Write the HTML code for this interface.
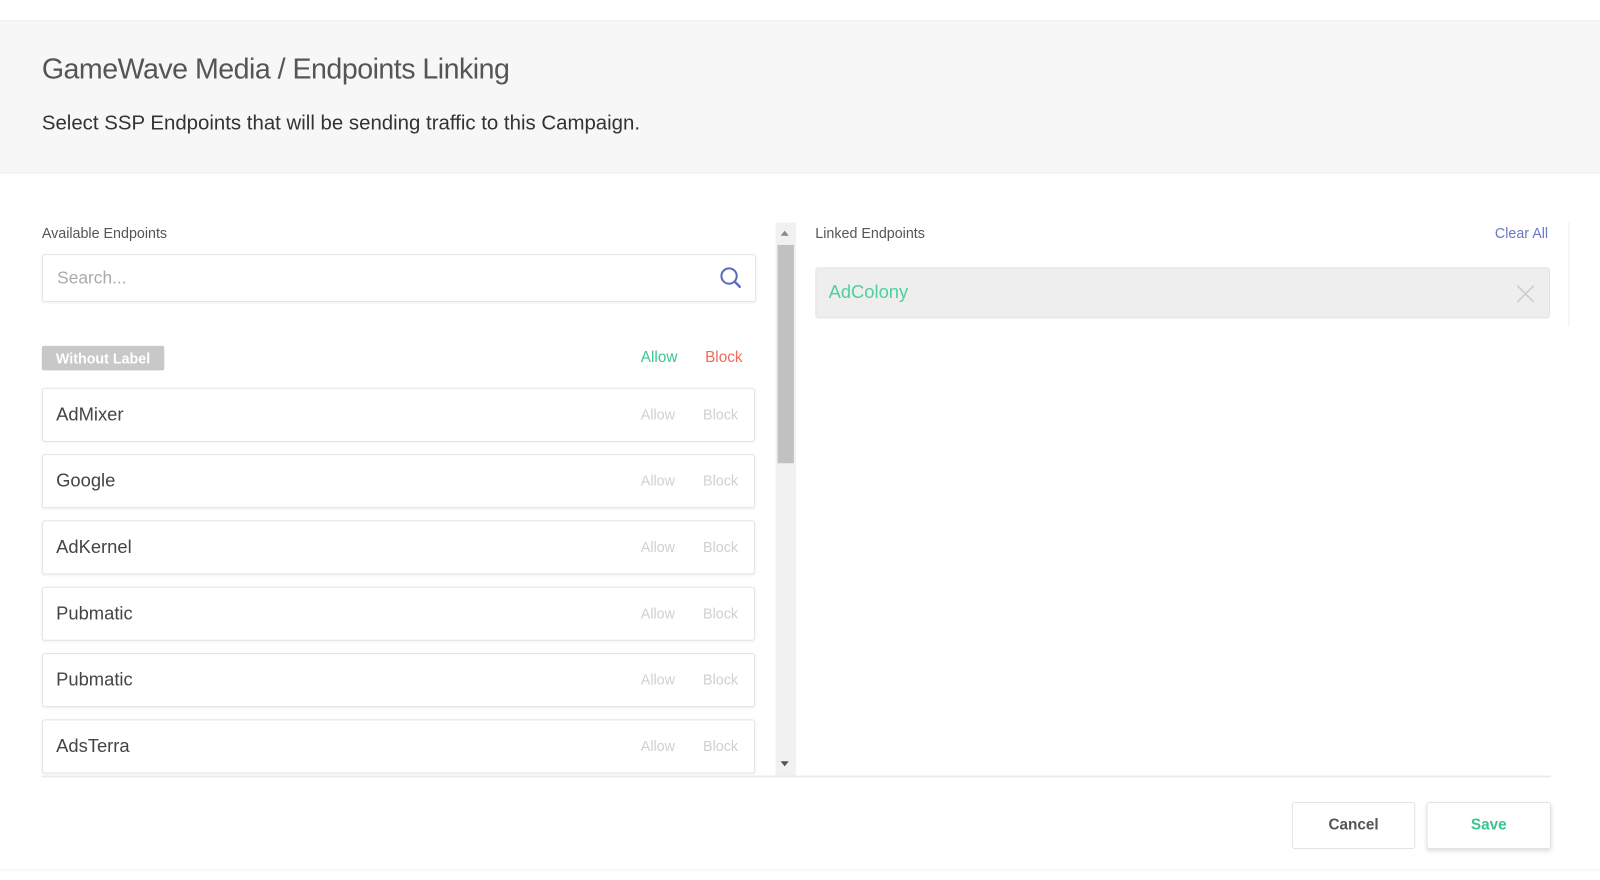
<!DOCTYPE html>
<html><head><style>
*{box-sizing:border-box;margin:0;padding:0}
body{width:1600px;height:879px;background:#fff;font-family:"Liberation Sans",sans-serif;position:relative;overflow:hidden}
#w{position:absolute;left:0;top:0;width:1568px;height:862px;transform:scale(1.0204);transform-origin:0 0}
.a{position:absolute}
.hdr{left:0;top:20px;width:1568px;height:150px;background:#f7f7f8;border-top:1px solid #ececec;border-bottom:1px solid #ececec}
.row{position:absolute;left:41px;width:699px;height:53px;border:1px solid #e3e3e3;border-radius:3px;background:#fff;box-shadow:0 1px 2px rgba(0,0,0,.05)}
.row .n{position:absolute;left:13px;top:15px;font-size:18px;color:#444}
.row .al{position:absolute;left:586px;top:17px;font-size:14px;color:#d0d0d0}
.row .bl{position:absolute;left:647px;top:17px;font-size:14px;color:#d0d0d0}
.btn{position:absolute;top:786px;height:46px;border:1px solid #e3e3e3;border-radius:3px;background:#fff;font-size:15px;font-weight:bold;text-align:center;line-height:44px}
</style></head><body><div id="w">
<div class="a hdr"></div>
<div class="a" style="left:41px;top:52px;font-size:28px;color:#555;letter-spacing:-0.5px">GameWave Media / Endpoints Linking</div>
<div class="a" style="left:41px;top:110px;font-size:20px;color:#333">Select SSP Endpoints that will be sending traffic to this Campaign.</div>

<div class="a" style="left:41px;top:220px;font-size:14px;color:#555">Available Endpoints</div>
<div class="a" style="left:41px;top:249px;width:700px;height:47px;border:1px solid #e3e3e3;border-radius:3px;box-shadow:0 1px 2px rgba(0,0,0,.05)"></div>
<div class="a" style="left:56px;top:263px;font-size:17px;color:#aaa">Search...</div>
<svg class="a" style="left:704px;top:260px" width="24" height="24" viewBox="0 0 24 24"><circle cx="10.5" cy="10.5" r="7.5" fill="none" stroke="#5c6bc0" stroke-width="2"/><path d="M16 16l5 5" stroke="#5c6bc0" stroke-width="2.4" stroke-linecap="round"/></svg>

<div class="a" style="left:41px;top:339px;width:120px;height:24px;background:#c8c8c8;border-radius:2px;color:#fff;font-size:14px;font-weight:bold;line-height:24px;text-align:center">Without Label</div>
<div class="a" style="left:628px;top:342px;font-size:15px;color:#3cc48f">Allow</div>
<div class="a" style="left:691px;top:342px;font-size:15px;color:#f0695b">Block</div>

<div class="row" style="top:380px"><span class="n">AdMixer</span><span class="al">Allow</span><span class="bl">Block</span></div>
<div class="row" style="top:445px"><span class="n">Google</span><span class="al">Allow</span><span class="bl">Block</span></div>
<div class="row" style="top:510px"><span class="n">AdKernel</span><span class="al">Allow</span><span class="bl">Block</span></div>
<div class="row" style="top:575px"><span class="n">Pubmatic</span><span class="al">Allow</span><span class="bl">Block</span></div>
<div class="row" style="top:640px"><span class="n">Pubmatic</span><span class="al">Allow</span><span class="bl">Block</span></div>
<div class="row" style="top:705px"><span class="n">AdsTerra</span><span class="al">Allow</span><span class="bl">Block</span></div>

<div class="a" style="left:760px;top:218px;width:20px;height:542px;background:#f1f1f1"></div>
<div class="a" style="left:762px;top:240px;width:16px;height:214px;background:#c1c1c1"></div>
<div class="a" style="left:765px;top:226px;width:0;height:0;border-left:4px solid transparent;border-right:4px solid transparent;border-bottom:5px solid #888"></div>
<div class="a" style="left:765px;top:746px;width:0;height:0;border-left:4px solid transparent;border-right:4px solid transparent;border-top:5px solid #555"></div>

<div class="a" style="left:799px;top:220px;font-size:14px;color:#555">Linked Endpoints</div>
<div class="a" style="left:1465px;top:220px;font-size:14px;color:#6b77c9">Clear All</div>
<div class="a" style="left:1537px;top:218px;width:1px;height:102px;background:#eee"></div>
<div class="a" style="left:799px;top:262px;width:720px;height:50px;background:#eeeeee;border:1px solid #e3e3e3;border-radius:3px"></div>
<div class="a" style="left:812px;top:276px;font-size:18px;color:#4fcf9c">AdColony</div>
<svg class="a" style="left:1486px;top:279px" width="18" height="18"><path d="M1 1L17 17M17 1L1 17" stroke="#ccc" stroke-width="1.5"/></svg>

<div class="a" style="left:41px;top:760px;width:1479px;height:2px;background:#ececec"></div>
<div class="btn" style="left:1266px;width:121px;color:#555">Cancel</div>
<div class="btn" style="left:1398px;width:122px;color:#3cc48f;box-shadow:0 2px 4px rgba(0,0,0,.12)">Save</div>
<div class="a" style="left:0;top:852px;width:1568px;height:1px;background:#f0f0f0"></div>
</div></body></html>
